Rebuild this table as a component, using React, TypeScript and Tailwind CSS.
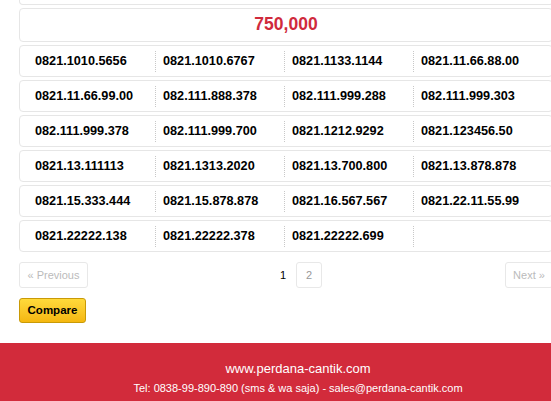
import React from "react";

const rows: string[][] = [
  ["0821.1010.5656", "0821.1010.6767", "0821.1133.1144", "0821.11.66.88.00"],
  ["0821.11.66.99.00", "082.111.888.378", "082.111.999.288", "082.111.999.303"],
  ["082.111.999.378", "082.111.999.700", "0821.1212.9292", "0821.123456.50"],
  ["0821.13.111113", "0821.1313.2020", "0821.13.700.800", "0821.13.878.878"],
  ["0821.15.333.444", "0821.15.878.878", "0821.16.567.567", "0821.22.11.55.99"],
  ["0821.22222.138", "0821.22222.378", "0821.22222.699", ""],
];

export default function App() {
  return (
    <div className="w-[551px] overflow-hidden">
      <div
        className="w-[596px] bg-white"
        style={{ fontFamily: '"Liberation Sans", Arial, sans-serif' }}
      >
        <div className="ml-[19px] w-[534px]">
          <div className="h-[5px] border-x border-b border-[#e6e6e6] rounded-b-[4px]" />
          <div className="mt-[3px] h-[34px] border border-[#e6e6e6] rounded-[4px] flex items-center justify-center pb-[1px] text-[17.5px] font-bold text-[#d02a3c]">
            750,000
          </div>
          {rows.map((row, i) => (
            <div
              key={i}
              className="mt-[3px] h-[32px] border border-[#e6e6e6] rounded-[4px] flex items-center px-[6px]"
            >
              {row.map((n, j) => (
                <div
                  key={j}
                  className={
                    "w-[129px] h-[21px] flex items-center text-[12.7px] font-bold text-black leading-[21px] " +
                    (j === 0
                      ? "pl-[9px]"
                      : "pl-[7px] border-l border-dotted border-[#c8c8c8]")
                  }
                >
                  {n}
                </div>
              ))}
            </div>
          ))}
          <div className="mt-[10px] flex items-center">
            <div className="h-[26px] w-[69px] border border-[#e8e8e8] rounded-[3px] flex items-center justify-center text-[11px] text-[#bbbbbb]">
              « Previous
            </div>
            <div className="ml-[184px] w-[22px] h-[26px] flex items-center justify-center text-[11px] text-black">
              1
            </div>
            <div className="ml-[2px] w-[26px] h-[26px] border border-[#e8e8e8] rounded-[3px] flex items-center justify-center text-[11px] text-[#999999]">
              2
            </div>
            <div className="ml-auto h-[26px] w-[48px] border border-[#e8e8e8] rounded-[3px] flex items-center justify-center text-[11px] text-[#bbbbbb]">
              Next »
            </div>
          </div>
          <div className="mt-[10px]">
            <button className="h-[25px] w-[67px] rounded-[3px] border border-[#c99a06] bg-gradient-to-b from-[#ffda3a] to-[#f5b70e] text-[11.5px] font-bold text-black flex items-center justify-center">
              Compare
            </button>
          </div>
        </div>
        <div className="mt-[20px] h-[58px] bg-[#d22b3b] pt-[17px] text-center text-white">
          <div className="text-[13px] leading-[17px]">www.perdana-cantik.com</div>
          <div className="mt-[4px] text-[11px] leading-[14px]">
            Tel: 0838-99-890-890 (sms &amp; wa saja) - sales@perdana-cantik.com
          </div>
        </div>
      </div>
    </div>
  );
}
